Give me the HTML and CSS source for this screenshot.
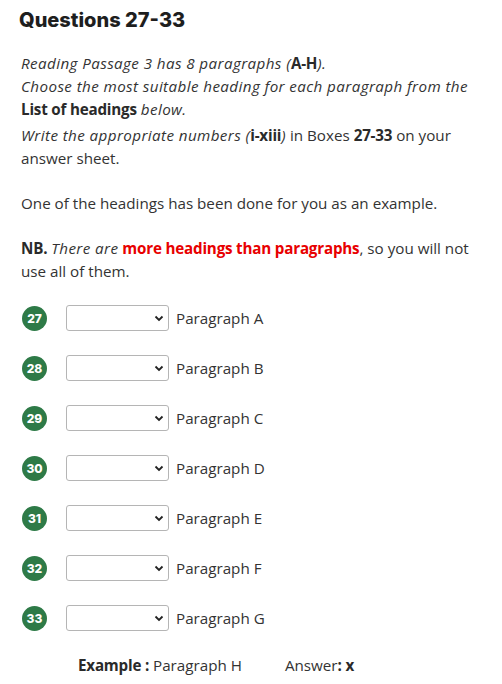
FILE: index.html
```html
<!DOCTYPE html>
<html>
<head>
<meta charset="utf-8">
<link rel="stylesheet" href="styles.css">
</head>
<body>
<div class="page">
  <h2 class="title">Questions 27-33</h2>
  <div class="instr">
    <p class="line"><em>Reading Passage 3 has 8 paragraphs (<b>A-H</b>).</em></p>
    <p class="line"><em>Choose the most suitable heading for each paragraph from the</em></p>
    <p class="line"><b>List of headings</b> <em>below.</em></p>
    <p class="line gap-s"><em>Write the appropriate numbers (<b>i-xiii</b>)</em> in Boxes <b>27-33</b> on your answer sheet.</p>
    <p class="line gap-l">One of the headings has been done for you as an example.</p>
    <p class="line gap-l"><b>NB.</b> <em>There are</em> <b class="red">more headings than paragraphs</b>, so you will not use all of them.</p>
  </div>
  <div class="rows">
    <div class="row"><span class="num">27</span><div class="sel"><svg width="10" height="7" viewBox="0 0 10 7"><path d="M1.5 1.5 L5 5 L8.5 1.5" fill="none" stroke="#222" stroke-width="1.8"/></svg></div><span class="lab">Paragraph A</span></div>
    <div class="row"><span class="num">28</span><div class="sel"><svg width="10" height="7" viewBox="0 0 10 7"><path d="M1.5 1.5 L5 5 L8.5 1.5" fill="none" stroke="#222" stroke-width="1.8"/></svg></div><span class="lab">Paragraph B</span></div>
    <div class="row"><span class="num">29</span><div class="sel"><svg width="10" height="7" viewBox="0 0 10 7"><path d="M1.5 1.5 L5 5 L8.5 1.5" fill="none" stroke="#222" stroke-width="1.8"/></svg></div><span class="lab">Paragraph C</span></div>
    <div class="row"><span class="num">30</span><div class="sel"><svg width="10" height="7" viewBox="0 0 10 7"><path d="M1.5 1.5 L5 5 L8.5 1.5" fill="none" stroke="#222" stroke-width="1.8"/></svg></div><span class="lab">Paragraph D</span></div>
    <div class="row"><span class="num">31</span><div class="sel"><svg width="10" height="7" viewBox="0 0 10 7"><path d="M1.5 1.5 L5 5 L8.5 1.5" fill="none" stroke="#222" stroke-width="1.8"/></svg></div><span class="lab">Paragraph E</span></div>
    <div class="row"><span class="num">32</span><div class="sel"><svg width="10" height="7" viewBox="0 0 10 7"><path d="M1.5 1.5 L5 5 L8.5 1.5" fill="none" stroke="#222" stroke-width="1.8"/></svg></div><span class="lab">Paragraph F</span></div>
    <div class="row"><span class="num">33</span><div class="sel"><svg width="10" height="7" viewBox="0 0 10 7"><path d="M1.5 1.5 L5 5 L8.5 1.5" fill="none" stroke="#222" stroke-width="1.8"/></svg></div><span class="lab">Paragraph G</span></div>
  </div>
  <div class="example">
    <span class="ex"><b>Example :</b> Paragraph H</span>
    <span class="ans">Answer<b>: x</b></span>
  </div>
</div>
</body>
</html>
```
FILE: styles.css
```css
html, body { margin: 0; padding: 0; background: #fff; }
body { font-family: "Open Sans", "Noto Sans", sans-serif; color: #333; }
.page { padding: 0 21px; }
.title {
  font-family: "Inter", "Open Sans", sans-serif;
  font-weight: 800;
  font-size: 20px;
  color: #1e1e1e;
  margin: 0;
  padding-top: 8px;
  line-height: 24px;
  margin-left: -2px;
}
.instr { margin-top: 20px; font-size: 15.2px; line-height: 23px; }
.instr em { letter-spacing: 0.4px; }
.line { margin: 0; }
.gap-s { margin-top: 3px; }
.gap-l { margin-top: 22px; }
.instr b { font-weight: 700; font-style: normal; color: #2a2a2a; letter-spacing: -0.2px; }
.instr b.red { color: #e80000; }
.rows { margin-top: 22px; display: flex; flex-direction: column; gap: 24px; }
.row { display: flex; align-items: center; height: 26px; }
.num {
  width: 25px; height: 25px; border-radius: 50%;
  background: #2e7a47; color: #fff;
  font-family: "Inter", sans-serif; font-weight: 800; font-size: 12px;
  display: flex; align-items: center; justify-content: center;
  margin-left: 1px;
}
.sel {
  width: 97px; height: 24px; margin-left: 19px;
  border: 1px solid #b5b5b5; border-radius: 3px;
  display: flex; align-items: center; justify-content: flex-end;
  padding-right: 4px;
}
.lab { margin-left: 7px; font-size: 15.2px; }
.example { margin-top: 24px; display: flex; font-size: 15.2px; padding-left: 57px; }
.ex b, .ans b { font-weight: 700; color: #2a2a2a; letter-spacing: -0.2px; }
.ans { margin-left: 43px; }
```
